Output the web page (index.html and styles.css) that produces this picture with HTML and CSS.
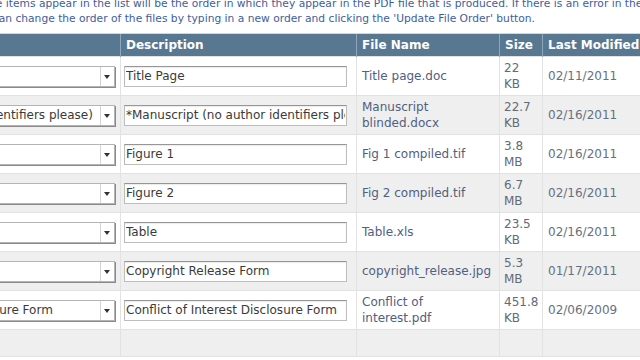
FILE: index.html
```html
<!DOCTYPE html>
<html lang="en">
<head>
  <meta charset="UTF-8" />
  <title>Manuscript Files</title>
  <link rel="stylesheet" href="styles.css">
</head>
<body>

<p class="intro">The order in which the items appear in the list will be the order in which they appear in the PDF file that is produced. If there is an error in the order,<br>You can change the order of the files by typing in a new order and clicking the 'Update File Order' button.</p>

<table class="files">
  <colgroup>
    <col class="c-type">
    <col class="c-desc">
    <col class="c-file">
    <col class="c-size">
    <col class="c-date">
  </colgroup>
  <thead>
    <tr>
      <th>Item Type</th>
      <th>Description</th>
      <th>File Name</th>
      <th>Size</th>
      <th>Last Modified</th>
    </tr>
  </thead>
  <tbody>
    <tr>
      <td class="type"><div class="select"><span class="select-text">Title Page</span><span class="select-btn"></span></div></td>
      <td class="desc"><input type="text" value="Title Page" /></td>
      <td class="file">Title page.doc</td>
      <td class="size">22 KB</td>
      <td class="date">02/11/2011</td>
    </tr>
    <tr>
      <td class="type"><div class="select"><span class="select-text">*Manuscript (no author identifiers please)</span><span class="select-btn"></span></div></td>
      <td class="desc"><input type="text" value="*Manuscript (no author identifiers please)" /></td>
      <td class="file">Manuscript blinded.docx</td>
      <td class="size">22.7 KB</td>
      <td class="date">02/16/2011</td>
    </tr>
    <tr>
      <td class="type"><div class="select"><span class="select-text">Figure</span><span class="select-btn"></span></div></td>
      <td class="desc"><input type="text" value="Figure 1" /></td>
      <td class="file">Fig 1 compiled.tif</td>
      <td class="size">3.8 MB</td>
      <td class="date">02/16/2011</td>
    </tr>
    <tr>
      <td class="type"><div class="select"><span class="select-text">Figure</span><span class="select-btn"></span></div></td>
      <td class="desc"><input type="text" value="Figure 2" /></td>
      <td class="file">Fig 2 compiled.tif</td>
      <td class="size">6.7 MB</td>
      <td class="date">02/16/2011</td>
    </tr>
    <tr>
      <td class="type"><div class="select"><span class="select-text">Table</span><span class="select-btn"></span></div></td>
      <td class="desc"><input type="text" value="Table" /></td>
      <td class="file">Table.xls</td>
      <td class="size">23.5 KB</td>
      <td class="date">02/16/2011</td>
    </tr>
    <tr>
      <td class="type"><div class="select"><span class="select-text">Copyright Form</span><span class="select-btn"></span></div></td>
      <td class="desc"><input type="text" value="Copyright Release Form" /></td>
      <td class="file">copyright_release.jpg</td>
      <td class="size">5.3 MB</td>
      <td class="date">01/17/2011</td>
    </tr>
    <tr>
      <td class="type"><div class="select"><span class="select-text">Conflict of Interest Disclosure Form</span><span class="select-btn"></span></div></td>
      <td class="desc"><input type="text" value="Conflict of Interest Disclosure Form" /></td>
      <td class="file">Conflict of interest.pdf</td>
      <td class="size">451.8 KB</td>
      <td class="date">02/06/2009</td>
    </tr>
    <tr class="empty">
      <td></td>
      <td></td>
      <td></td>
      <td></td>
      <td></td>
    </tr>
  </tbody>
</table>

</body>
</html>
```

FILE: styles.css
```css
html, body {
  overflow: hidden;
}
body {
  margin: 0;
  width: 640px;
  height: 360px;
  background: #fff;
  font-family: "DejaVu Sans", Verdana, sans-serif;
  font-size: 12px;
  color: #333;
}
.intro {
  font-size: 10.7px;
  line-height: 15px;
  color: #3d5e9a;
  white-space: nowrap;
  margin: -4px 0 7px -29px;
  text-indent: -89px;
}
.files {
  margin-left: -180px;
  width: 832px;
  border-collapse: collapse;
  table-layout: fixed;
}
.c-type { width: 300px; }
.c-desc { width: 236px; }
.c-file { width: 143px; }
.c-size { width: 43px; }
.c-date { width: 110px; }
.files th {
  background: #587892;
  color: #fff;
  font-weight: bold;
  text-align: left;
  padding: 3px 5px;
  line-height: 16px;
  border-left: 1px solid #8fa5b8;
  border-top: 1px solid #cfd8e0;
}
.files td {
  padding: 3px 5px;
  line-height: 16px;
  border: 1px solid #e2e2e2;
  vertical-align: middle;
}
.files tbody tr:nth-child(even) td {
  background: #efefef;
}
.files tr.empty td {
  height: 20px;
}
td.type {
  padding: 3px 5px 3px 15px;
}
td.desc {
  padding: 3px 9px 3px 3px;
}
td.file {
  color: #51607f;
}
td.size {
  padding: 3px 3px 3px 4px;
  color: #636a76;
}
td.date {
  color: #677080;
}
.select {
  display: flex;
  height: 19px;
  background: #fff;
  border: 1px solid #b4b4b4;
  box-shadow: 1px 1px 0 #8a8a8a;
}
.select-text {
  flex: 1;
  padding: 0 5px;
  line-height: 19px;
  white-space: nowrap;
  overflow: hidden;
  color: #3a3a3a;
}
.select-btn {
  position: relative;
  width: 13px;
  border-left: 1px solid #d4d4d4;
}
.select-btn::after {
  content: "";
  position: absolute;
  left: 3px;
  top: 8px;
  border-left: 3px solid transparent;
  border-right: 3px solid transparent;
  border-top: 4px solid #333;
}
.desc input {
  display: block;
  width: 100%;
  height: 21px;
  box-sizing: border-box;
  margin: 0;
  padding: 0 1px;
  font-family: "DejaVu Sans", Verdana, sans-serif;
  font-size: 12px;
  color: #3a3a3a;
  background: #fff;
  border: 1px solid #bdbdbd;
  border-top-color: #969696;
  box-shadow: inset 0 1px 1px rgba(0, 0, 0, 0.08);
}
```
